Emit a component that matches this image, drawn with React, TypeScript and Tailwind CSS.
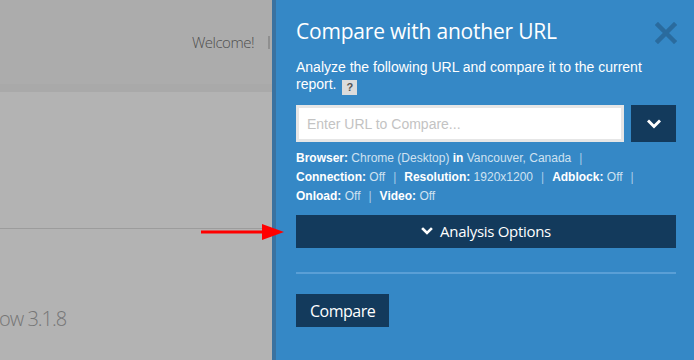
import React from 'react';

const Sep: React.FC = () => <span className="text-[#a9cbe6] mx-[8px]">|</span>;

const InfoLine: React.FC<{ items: [string, string][]; trailing?: boolean }> = ({ items, trailing }) => (
    <div className="h-[19px] leading-[19px]">
        {items.map(([label, value], i) => (
            <React.Fragment key={label}>
                {i > 0 && <Sep />}
                <span className="font-bold text-white">{label}:</span>{' '}
                <span className="text-[#cfe2f1]">{value}</span>
            </React.Fragment>
        ))}
        {trailing && <span className="text-[#a9cbe6] ml-[8px]">|</span>}
    </div>
);

const App: React.FC = () => {
    return (
        <div className="relative flex w-[694px] h-[360px] overflow-hidden bg-[#b3b3b3]">
            {/* page behind the overlay */}
            <div className="flex flex-col w-[272px] shrink-0">
                <div className="h-[84px] bg-[#acacac] flex items-center justify-end pr-[2px]">
                    <span className="text-[15px] text-[#4f4f4f] font-light tracking-[-0.5px]" style={{ fontFamily: '"Open Sans", sans-serif' }}>
                        Welcome!
                    </span>
                    <span className="ml-[14px] w-[2px] h-[13px] bg-[#8f8f8f]" />
                </div>
                <div className="h-[8px] bg-[#a9a9a9]" />
                <div className="h-[136px]" />
                <div className="h-px bg-[#9c9c9c]" />
                <div className="pt-[75px] -ml-[1px]">
                    <span className="text-[20px] font-light text-[#767676] tracking-[-1px]" style={{ fontFamily: '"Open Sans", sans-serif' }}>ow 3.1.8</span>
                </div>
            </div>

            {/* side panel */}
            <div className="flex flex-col w-[422px] shrink-0 border-l-4 border-[#3a72a0] bg-[#3588c6] pl-[20px] pr-[18px] pt-[15px]">
                <div className="flex items-start justify-between">
                    <h2 className="text-[21px] leading-[32px] text-white tracking-[-0.2px]" style={{ fontFamily: '"Open Sans", sans-serif' }}>
                        Compare with another URL
                    </h2>
                    <svg width="22" height="22" viewBox="0 0 22 22" className="mt-[7px] mr-[-1px]">
                        <path d="M3 3 L19 19 M19 3 L3 19" stroke="#2a6b9e" strokeWidth="4.5" strokeLinecap="square" />
                    </svg>
                </div>
                <p className="mt-[12px] text-[14px] leading-[17px] text-white pr-[20px]" style={{ fontFamily: '"Liberation Sans", Arial, sans-serif' }}>
                    Analyze the following URL and compare it to the current report.{' '}
                    <span className="inline-flex items-center justify-center w-[15px] h-[15px] bg-[#dcdcdc] text-[#555] text-[11px] font-bold align-[-2px] ml-[2px]">?</span>
                </p>
                <div className="flex gap-[7px] mt-[10px]">
                    <input
                        className="flex-1 h-[37px] border-[3px] border-[#e6e6e6] bg-white px-[8px] text-[14px] text-[#333] placeholder:text-[#c3c3c3] outline-none"
                        style={{ fontFamily: '"Liberation Sans", Arial, sans-serif' }}
                        placeholder="Enter URL to Compare..."
                    />
                    <button className="w-[45px] h-[37px] bg-[#133a5c] flex items-center justify-center">
                        <svg width="14" height="10" viewBox="0 0 14 10">
                            <path d="M2 2.5 L7 7.5 L12 2.5" stroke="#fff" strokeWidth="3" fill="none" strokeLinecap="square" />
                        </svg>
                    </button>
                </div>
                <div className="mt-[7px] text-[12px]" style={{ fontFamily: '"Liberation Sans", Arial, sans-serif' }}>
                    <div className="h-[19px] leading-[19px]">
                        <span className="font-bold text-white">Browser:</span>{' '}
                        <span className="text-[#cfe2f1]">Chrome (Desktop)</span>{' '}
                        <span className="font-bold text-white">in</span>{' '}
                        <span className="text-[#cfe2f1]">Vancouver, Canada</span>
                        <span className="text-[#a9cbe6] ml-[8px]">|</span>
                    </div>
                    <InfoLine items={[['Connection', 'Off'], ['Resolution', '1920x1200'], ['Adblock', 'Off']]} trailing />
                    <InfoLine items={[['Onload', 'Off'], ['Video', 'Off']]} />
                </div>
                <button
                    className="mt-[9px] h-[33px] bg-[#133a5c] flex items-center justify-center gap-[7px] text-white text-[15px] tracking-[-0.3px]"
                    style={{ fontFamily: '"Open Sans", sans-serif' }}
                >
                    <svg width="12" height="9" viewBox="0 0 12 9">
                        <path d="M2 2 L6 6 L10 2" stroke="#fff" strokeWidth="2.6" fill="none" strokeLinecap="square" />
                    </svg>
                    Analysis Options
                </button>
                <div className="mt-[24px] h-[2px] bg-[#5a9fd6]" />
                <div className="mt-[20px]">
                    <button
                        className="h-[33px] px-[14px] bg-[#133a5c] text-white text-[16px] tracking-[-0.5px]"
                        style={{ fontFamily: '"Open Sans", sans-serif' }}
                    >
                        Compare
                    </button>
                </div>
            </div>

            {/* annotation arrow */}
            <svg className="absolute left-[200px] top-[222px]" width="86" height="20" viewBox="0 0 86 20">
                <path d="M1 10 H64" stroke="#f00" strokeWidth="3" />
                <path d="M62 2 L84 10 L62 18 Z" fill="#f00" />
            </svg>
        </div>
    );
};

export default App;
